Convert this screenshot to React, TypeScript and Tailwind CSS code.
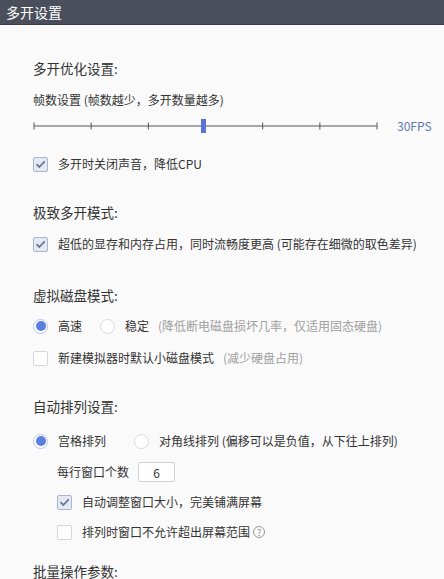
import { useState } from "react";

const font = { fontFamily: '"Microsoft YaHei", "Noto Sans CJK SC", "Noto Sans", sans-serif' };

function Checkbox({ checked, onChange }: { checked: boolean; onChange: () => void }) {
  return (
    <button
      onClick={onChange}
      className={`w-[15px] h-[15px] rounded-[2px] border flex items-center justify-center shrink-0 ${
        checked ? "bg-[#e4e9f4] border-[#a9b6d2]" : "bg-white border-[#d4d7de]"
      }`}
    >
      {checked && (
        <svg width="11" height="11" viewBox="0 0 11 11">
          <path d="M2 5.6 L4.4 8 L9.2 2.8" fill="none" stroke="#6a7897" strokeWidth="1.8" strokeLinecap="round" strokeLinejoin="round" />
        </svg>
      )}
    </button>
  );
}

function Radio({ checked, onChange }: { checked: boolean; onChange: () => void }) {
  return (
    <button
      onClick={onChange}
      className={`w-[15px] h-[15px] rounded-full border flex items-center justify-center shrink-0 bg-white ${
        checked ? "border-[#b9c7ec]" : "border-[#d6d9e0]"
      }`}
    >
      {checked && <span className="w-[10px] h-[10px] rounded-full bg-[#5b7fe0]" />}
    </button>
  );
}

function Heading({ children, className = "" }: { children: React.ReactNode; className?: string }) {
  return <div className={`h-5 flex items-center text-[13.5px] text-[#333] ${className}`}>{children}</div>;
}

export default function App() {
  const [muteAudio, setMuteAudio] = useState(true);
  const [extreme, setExtreme] = useState(true);
  const [diskMode, setDiskMode] = useState<"fast" | "stable">("fast");
  const [smallDisk, setSmallDisk] = useState(false);
  const [arrange, setArrange] = useState<"grid" | "diagonal">("grid");
  const [perRow, setPerRow] = useState("6");
  const [autoResize, setAutoResize] = useState(true);
  const [noOverflow, setNoOverflow] = useState(false);

  const ticks = [0, 1, 2, 3, 4, 5, 6];

  return (
    <div className="w-[444px] h-[579px] overflow-hidden bg-[#fafafa] text-[12px] text-[#333]" style={font}>
      {/* Title bar */}
      <div className="h-[25px] bg-[#4b4e5b] border-b border-[#3c3e49] flex items-center px-[6px]">
        <span className="text-white text-[14px]">多开设置</span>
      </div>

      <div className="pl-[33px]">
        {/* 多开优化设置 */}
        <Heading className="mt-[33px]">多开优化设置:</Heading>
        <div className="mt-3 h-5 flex items-center">帧数设置 (帧数越少，多开数量越多)</div>
        <div className="mt-[6px] h-5 flex items-center">
          <svg width="346" height="20" viewBox="0 0 346 20" className="shrink-0">
            <line x1="1" y1="10" x2="344" y2="10" stroke="#555" strokeWidth="1" />
            {ticks.map((t) => (
              <line key={t} x1={1 + t * 57.17} y1="6.5" x2={1 + t * 57.17} y2="13.5" stroke="#555" strokeWidth="1" />
            ))}
            <rect x="168" y="3" width="5" height="14" fill="#5a73d6" />
          </svg>
          <span className="ml-[18px] text-[#5b78b4] text-[12px]">30FPS</span>
        </div>
        <div className="mt-[18px] h-5 flex items-center gap-[10px]">
          <Checkbox checked={muteAudio} onChange={() => setMuteAudio(!muteAudio)} />
          <span>多开时关闭声音，降低CPU</span>
        </div>

        {/* 极致多开模式 */}
        <Heading className="mt-7">极致多开模式:</Heading>
        <div className="mt-3 h-5 flex items-center gap-[10px]">
          <Checkbox checked={extreme} onChange={() => setExtreme(!extreme)} />
          <span>超低的显存和内存占用，同时流畅度更高 (可能存在细微的取色差异)</span>
        </div>

        {/* 虚拟磁盘模式 */}
        <Heading className="mt-[31px]">虚拟磁盘模式:</Heading>
        <div className="mt-[11px] h-5 flex items-center">
          <Radio checked={diskMode === "fast"} onChange={() => setDiskMode("fast")} />
          <span className="ml-[10px]">高速</span>
          <span className="ml-[18px]">
            <Radio checked={diskMode === "stable"} onChange={() => setDiskMode("stable")} />
          </span>
          <span className="ml-[10px]">稳定</span>
          <span className="ml-[9px] text-[#a0a0a0]">(降低断电磁盘损坏几率，仅适用固态硬盘)</span>
        </div>
        <div className="mt-3 h-5 flex items-center gap-[10px]">
          <Checkbox checked={smallDisk} onChange={() => setSmallDisk(!smallDisk)} />
          <span>
            新建模拟器时默认小磁盘模式<span className="ml-[9px] text-[#a0a0a0]">(减少硬盘占用)</span>
          </span>
        </div>

        {/* 自动排列设置 */}
        <Heading className="mt-7">自动排列设置:</Heading>
        <div className="mt-[15px] h-5 flex items-center">
          <Radio checked={arrange === "grid"} onChange={() => setArrange("grid")} />
          <span className="ml-[10px]">宫格排列</span>
          <span className="ml-[28px]">
            <Radio checked={arrange === "diagonal"} onChange={() => setArrange("diagonal")} />
          </span>
          <span className="ml-[10px]">对角线排列 (偏移可以是负值，从下往上排列)</span>
        </div>
        <div className="pl-[24px]">
          <div className="mt-[11px] h-5 flex items-center">
            <span>每行窗口个数</span>
            <input
              value={perRow}
              onChange={(e) => setPerRow(e.target.value)}
              className="ml-[9px] w-[37px] h-[20px] border border-[#cfd2d8] rounded-[2px] bg-white text-center text-[12px] outline-none text-[#333]"
            />
          </div>
          <div className="mt-[10px] h-5 flex items-center gap-[10px]">
            <Checkbox checked={autoResize} onChange={() => setAutoResize(!autoResize)} />
            <span>自动调整窗口大小，完美铺满屏幕</span>
          </div>
          <div className="mt-[10px] h-5 flex items-center gap-[10px]">
            <Checkbox checked={noOverflow} onChange={() => setNoOverflow(!noOverflow)} />
            <span className="flex items-center gap-[3px]">
              排列时窗口不允许超出屏幕范围
              <span className="w-[12px] h-[12px] rounded-full border border-[#9a9a9a] text-[#8a8a8a] text-[9px] leading-none flex items-center justify-center">
                ?
              </span>
            </span>
          </div>
        </div>

        {/* 批量操作参数 */}
        <Heading className="mt-[19px]">批量操作参数:</Heading>
      </div>
    </div>
  );
}
